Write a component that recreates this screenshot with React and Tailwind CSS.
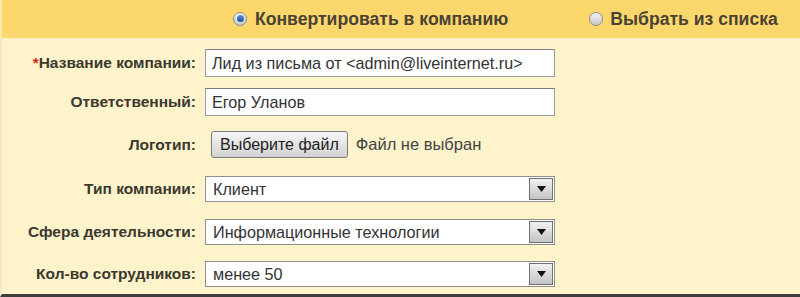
import React from 'react';

const font = { fontFamily: '"Liberation Sans", Arial, sans-serif' };

function Radio({ checked }) {
  return (
    <span className="relative inline-flex h-[14px] w-[14px] items-center justify-center rounded-full border border-[#8a8a8a] bg-gradient-to-b from-[#f4f4f4] to-[#c9c9c9]">
      {checked && <span className="h-[7px] w-[7px] rounded-full bg-gradient-to-b from-[#5a8fd8] to-[#1d4f9c]" />}
    </span>
  );
}

function Arrow() {
  return (
    <span className="flex h-full w-[24px] items-center justify-center border border-[#6f6f6f] bg-gradient-to-b from-[#f2f2f2] to-[#c4c4c4]">
      <svg width="9" height="6" viewBox="0 0 9 6"><path d="M0 0h9L4.5 6z" fill="#111" /></svg>
    </span>
  );
}

function Row({ label, required, className, children }) {
  return (
    <div className={`flex items-center ${className}`}>
      <div className="w-[195px] shrink-0 whitespace-nowrap pr-[1px] text-right text-[15.5px] font-bold text-[#3a382f]">
        {required && <span className="text-[#d22]">*</span>}
        {label}
      </div>
      <div className="ml-[8px] flex items-center">{children}</div>
    </div>
  );
}

function TextField({ value }) {
  return (
    <div className="flex h-[28px] w-[350px] items-center whitespace-nowrap border border-[#9c9c9c] border-t-[#7d7d7d] bg-white px-[6px] text-[16.2px] text-[#333]">
      {value}
    </div>
  );
}

function SelectField({ value }) {
  return (
    <div className="flex h-[26px] w-[350px] items-center border border-[#8f8f8f] bg-white p-[1px] pl-[7px] text-[16.2px] text-[#333]">
      <span className="flex-1">{value}</span>
      <Arrow />
    </div>
  );
}

export default function App() {
  return (
    <div className="h-[297px] w-[800px] overflow-hidden bg-[#fef3cb]" style={font}>
      <div className="flex h-[38px] items-center border-l-2 border-[#fbe9a8] bg-[#fcd86c] text-[17.6px] font-bold text-[#4a4233]">
        <label className="ml-[231px] flex items-center gap-[8px]">
          <Radio checked />
          Конвертировать в компанию
        </label>
        <label className="ml-[81px] flex items-center gap-[7px]">
          <Radio />
          Выбрать из списка
        </label>
      </div>
      <div className="h-[259px] border-b-[3px] border-l-2 border-b-[#3d3d3d] border-l-[#f6e9bf] pt-[11px]">
        <Row label="Название компании:" required>
          <TextField value="Лид из письма от <admin@liveinternet.ru>" />
        </Row>
        <Row label="Ответственный:" className="mt-[11px]">
          <TextField value="Егор Уланов" />
        </Row>
        <Row label="Логотип:" className="mt-[15px]">
          <button className="ml-[6px] h-[27px] rounded-[3px] border border-[#7a7a7a] bg-gradient-to-b from-[#f6f6f6] to-[#d2d2d2] px-[8px] text-[16px] text-[#222]">
            Выберите файл
          </button>
          <span className="ml-[8px] text-[16.5px] text-[#444]">Файл не выбран</span>
        </Row>
        <Row label="Тип компании:" className="mt-[18px]">
          <SelectField value="Клиент" />
        </Row>
        <Row label="Сфера деятельности:" className="mt-[17px]">
          <SelectField value="Информационные технологии" />
        </Row>
        <Row label="Кол-во сотрудников:" className="mt-[16px]">
          <SelectField value="менее 50" />
        </Row>
      </div>
    </div>
  );
}
